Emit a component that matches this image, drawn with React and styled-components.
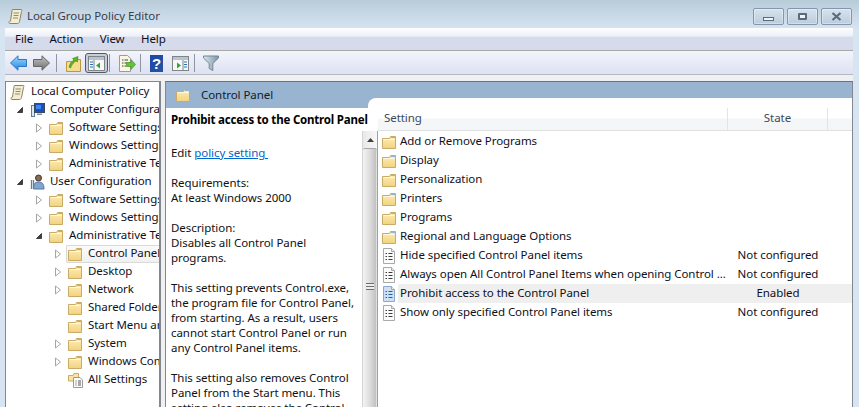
import React from 'react';
import styled, { createGlobalStyle } from 'styled-components';

const GlobalStyle = createGlobalStyle`
  html, body {
    margin: 0;
    padding: 0;
    height: 100%;
    overflow: hidden;
  }
  body {
    font-family: "Noto Sans", "Open Sans", sans-serif;
    font-size: 11.5px;
    letter-spacing: -0.06px;
    color: #111;
  }
`;

const treeItems = [
  { level: 0, icon: 'scroll', label: 'Local Computer Policy' },
  { level: 1, arrow: 'open', icon: 'computer', label: 'Computer Configuration' },
  { level: 2, arrow: 'closed', icon: 'folder', label: 'Software Settings' },
  { level: 2, arrow: 'closed', icon: 'folder', label: 'Windows Settings' },
  { level: 2, arrow: 'closed', icon: 'folder', label: 'Administrative Templates' },
  { level: 1, arrow: 'open', icon: 'user', label: 'User Configuration' },
  { level: 2, arrow: 'closed', icon: 'folder', label: 'Software Settings' },
  { level: 2, arrow: 'closed', icon: 'folder', label: 'Windows Settings' },
  { level: 2, arrow: 'open', icon: 'folder', label: 'Administrative Templates' },
  { level: 3, arrow: 'closed', icon: 'folder', label: 'Control Panel', selected: true },
  { level: 3, arrow: 'closed', icon: 'folder', label: 'Desktop' },
  { level: 3, arrow: 'closed', icon: 'folder', label: 'Network' },
  { level: 3, icon: 'folder', label: 'Shared Folders' },
  { level: 3, icon: 'folder', label: 'Start Menu and Taskbar' },
  { level: 3, arrow: 'closed', icon: 'folder', label: 'System' },
  { level: 3, arrow: 'closed', icon: 'folder', label: 'Windows Components' },
  { level: 3, icon: 'settings', label: 'All Settings' },
];

const settings = [
  { icon: 'folder', name: 'Add or Remove Programs', state: '' },
  { icon: 'folder', name: 'Display', state: '' },
  { icon: 'folder', name: 'Personalization', state: '' },
  { icon: 'folder', name: 'Printers', state: '' },
  { icon: 'folder', name: 'Programs', state: '' },
  { icon: 'folder', name: 'Regional and Language Options', state: '' },
  { icon: 'doc', name: 'Hide specified Control Panel items', state: 'Not configured' },
  { icon: 'doc', name: 'Always open All Control Panel Items when opening Control ...', state: 'Not configured' },
  { icon: 'doc', name: 'Prohibit access to the Control Panel', state: 'Enabled', selected: true },
  { icon: 'doc', name: 'Show only specified Control Panel items', state: 'Not configured' },
];

function FolderIcon() {
  return (
    <svg width="15" height="14" viewBox="0 0 15 14">
      <defs>
        <linearGradient id="fold" x1="0" y1="0" x2="0" y2="1">
          <stop offset="0" stopColor="#fdeebb" />
          <stop offset="1" stopColor="#f2d27c" />
        </linearGradient>
      </defs>
      <path d="M0.5 3.5H7.5L8.5 1.5L13.5 1.5V13.5H0.5Z" fill="url(#fold)" stroke="#c9ab68" />
      <path d="M1.5 4.5H12.5" stroke="#fff8dc" fill="none" />
      <path d="M9 2.5H13" stroke="#8fb8d8" fill="none" />
    </svg>
  );
}

function DocIcon({ selected }) {
  return (
    <svg width="15" height="16" viewBox="0 0 15 16">
      <path d="M1.5 0.5H9.5L12.5 3.5V15.5H1.5Z" fill={selected ? '#cfe0f6' : '#fbfbfb'} stroke={selected ? '#8aa8cf' : '#a9a9a9'} />
      <path d="M9.5 0.5V3.5H12.5" fill={selected ? '#f8f3b0' : '#e8e8e8'} stroke={selected ? '#8aa8cf' : '#a9a9a9'} />
      <path d="M3.5 5.5H5M6.5 5.5H10.5M3.5 8.5H5M6.5 8.5H10.5M3.5 11.5H5M6.5 11.5H10.5" stroke={selected ? '#1f5fa8' : '#3c3c3c'} />
    </svg>
  );
}

function ScrollIcon() {
  return (
    <svg width="15" height="17" viewBox="0 0 15 17">
      <path d="M4.5 1.5H13.5C14 1.5 14 3 13.5 3.5L11.5 13.5C11 15.5 10 15.5 9 15.5H2C0.5 15.5 0.5 13 2.5 13L4 3C4 2 4 1.5 4.5 1.5Z" fill="#f5edcf" stroke="#8c8468" />
      <path d="M5.5 5H11M5.5 7.5H10.5M5 10H10" stroke="#8f8a78" />
    </svg>
  );
}

function ComputerIcon() {
  return (
    <svg width="15" height="16" viewBox="0 0 15 16">
      <rect x="1.5" y="3.5" width="3" height="11" fill="#dfe6ee" stroke="#5f7d9c" />
      <rect x="4.5" y="1.5" width="10" height="9" fill="#1a4fc4" stroke="#3b4a63" />
      <path d="M6 3H11V7H6Z" fill="#3f88ea" />
      <path d="M7 11.5H12V13H7Z" fill="#7c8ea3" />
    </svg>
  );
}

function UserIcon() {
  return (
    <svg width="15" height="16" viewBox="0 0 15 16">
      <circle cx="8.5" cy="4" r="3" fill="#8a6a50" stroke="#3b3a3a" />
      <path d="M3.5 15C3.5 9 5.5 8 8.5 8C12 8 14 9.5 14 15Z" fill="#7fa6cf" stroke="#55789c" />
      <path d="M1.5 6V15M3.5 6V15" stroke="#5e7f9f" strokeWidth="1.3" />
    </svg>
  );
}

function SettingsIcon() {
  return (
    <svg width="15" height="16" viewBox="0 0 15 16">
      <path d="M0.5 3.5H5L6 1.5H10.5V9H0.5Z" fill="#f9e4a4" stroke="#c9ab68" />
      <path d="M5.5 5.5H12L14.5 8V15.5H5.5Z" fill="#fbfbfb" stroke="#9a9a9a" />
      <path d="M7.5 9H8.5M10 9H13M7.5 11H8.5M10 11H13M7.5 13H8.5M10 13H13" stroke="#555" />
    </svg>
  );
}

const treeIcons = {
  scroll: ScrollIcon,
  computer: ComputerIcon,
  user: UserIcon,
  folder: FolderIcon,
  settings: SettingsIcon,
};

function TreeArrow({ kind }) {
  if (kind === 'open') {
    return (
      <svg width="8" height="8" viewBox="0 0 8 8">
        <path d="M6.5 1.5V6.5H1.5Z" fill="#404040" stroke="#404040" />
      </svg>
    );
  }
  return (
    <svg width="8" height="10" viewBox="0 0 8 10">
      <path d="M1.5 1V9L6.5 5Z" fill="#fff" stroke="#a6a6a6" />
    </svg>
  );
}

function BackIcon() {
  return (
    <svg width="17" height="16" viewBox="0 0 17 16">
      <defs>
        <linearGradient id="back" x1="0" y1="0" x2="0" y2="1">
          <stop offset="0" stopColor="#9fdcff" />
          <stop offset="1" stopColor="#1f83e0" />
        </linearGradient>
      </defs>
      <path d="M0.5 8L8 0.8V4.5H16.5V11.5H8V15.2Z" fill="url(#back)" stroke="#2b78c4" />
    </svg>
  );
}

function ForwardIcon() {
  return (
    <svg width="17" height="16" viewBox="0 0 17 16">
      <defs>
        <linearGradient id="fwd" x1="0" y1="0" x2="0" y2="1">
          <stop offset="0" stopColor="#c4c4c4" />
          <stop offset="1" stopColor="#6e6e6e" />
        </linearGradient>
      </defs>
      <path d="M16.5 8L9 0.8V4.5H0.5V11.5H9V15.2Z" fill="url(#fwd)" stroke="#666" />
    </svg>
  );
}

function FolderUpIcon() {
  return (
    <svg width="15" height="17" viewBox="0 0 15 17">
      <path d="M0.5 6.5H7L8 4.5H14.5V16.5H0.5Z" fill="#f5dc8f" stroke="#b9993f" />
      <path d="M3 12C4 8 6 6 8 5L6.5 3.5L12 1.5L11.5 7L10 6C8 7 6 9 4.5 13Z" fill="#5fb41e" stroke="#3f8a10" strokeWidth="0.6" />
    </svg>
  );
}

function PaneIcon({ arrowRight }) {
  return (
    <svg width="17" height="15" viewBox="0 0 17 15">
      <rect x="0.5" y="0.5" width="16" height="14" fill="#f7f7f7" stroke="#7f8489" />
      <rect x="1" y="1" width="15" height="3" fill="#b9c4cf" />
      {arrowRight ? (
        <>
          <path d="M5 6.5L9 9.5L5 12.5Z" fill="#2fa82f" />
          <path d="M12 6H15M12 8.5H15M12 11H15" stroke="#2a6fb0" strokeWidth="1.2" />
          <path d="M11 4V14" stroke="#7f8489" />
        </>
      ) : (
        <>
          <path d="M12 6.5L8 9.5L12 12.5Z" fill="#2fa82f" />
          <path d="M2 6H5M2 8.5H5M2 11H5" stroke="#2a6fb0" strokeWidth="1.2" />
          <path d="M6 4V14" stroke="#7f8489" />
        </>
      )}
    </svg>
  );
}

function ExportIcon() {
  return (
    <svg width="18" height="17" viewBox="0 0 18 17">
      <path d="M1.5 0.5H9.5L12.5 3.5V16.5H1.5Z" fill="#fbf6e2" stroke="#9d9d8f" />
      <path d="M4 5H5.5M6.5 5H10M4 8H5.5M6.5 8H9M4 11H5.5M6.5 11H8" stroke="#444" />
      <path d="M8.5 7.5H13V4.5L17.5 9.5L13 14.5V11.5H8.5Z" fill="#63c23a" stroke="#3f962a" strokeWidth="0.7" />
    </svg>
  );
}

function FilterIcon() {
  return (
    <svg width="16" height="16" viewBox="0 0 16 16">
      <defs>
        <linearGradient id="filt" x1="0" y1="0" x2="1" y2="0">
          <stop offset="0" stopColor="#dbe5ea" />
          <stop offset="1" stopColor="#7d95a5" />
        </linearGradient>
      </defs>
      <path d="M0.5 1H15.5V3L9.8 8.5V15.5L6.2 13.5V8.5L0.5 3Z" fill="url(#filt)" stroke="#6f8797" />
    </svg>
  );
}

export default function App() {
  return (
    <>
      <GlobalStyle />
      <Window>
        <TitleBar>
          <TitleLeft>
            <ScrollIcon />
            <TitleText>Local Group Policy Editor</TitleText>
          </TitleLeft>
          <WindowButtons>
            <WindowButton>
              <MinGlyph />
            </WindowButton>
            <WindowButton>
              <MaxGlyph />
            </WindowButton>
            <WindowButton>
              <svg width="11" height="9" viewBox="0 0 11 9">
                <path d="M1.5 1L9.5 8M9.5 1L1.5 8" stroke="#5c6b7a" strokeWidth="2.2" fill="none" />
              </svg>
            </WindowButton>
          </WindowButtons>
        </TitleBar>

        <MenuBar>
          <MenuItem>File</MenuItem>
          <MenuItem>Action</MenuItem>
          <MenuItem>View</MenuItem>
          <MenuItem>Help</MenuItem>
        </MenuBar>

        <Toolbar>
          <ToolSlot $ml={5}><BackIcon /></ToolSlot>
          <ToolSlot $ml={6}><ForwardIcon /></ToolSlot>
          <ToolSeparator $ml={6} />
          <ToolSlot $ml={9}><FolderUpIcon /></ToolSlot>
          <ToggleButton><PaneIcon /></ToggleButton>
          <ToolSeparator $ml={1} />
          <ToolSlot $ml={8}><ExportIcon /></ToolSlot>
          <ToolSeparator $ml={4} />
          <ToolSlot $ml={9}><HelpIcon>?</HelpIcon></ToolSlot>
          <ToolSlot $ml={9}><PaneIcon arrowRight /></ToolSlot>
          <ToolSeparator $ml={5} />
          <ToolSlot $ml={8}><FilterIcon /></ToolSlot>
        </Toolbar>

        <Panes>
          <TreePane>
            {treeItems.map((item, i) => {
              const Icon = treeIcons[item.icon];
              return (
                <TreeRow key={i} $level={item.level}>
                  {item.level > 0 && (
                    <ArrowSlot>{item.arrow && <TreeArrow kind={item.arrow} />}</ArrowSlot>
                  )}
                  <TreeNode $selected={item.selected}>
                    <TreeIconSlot $root={item.level === 0}><Icon /></TreeIconSlot>
                    <TreeLabel>{item.label}</TreeLabel>
                  </TreeNode>
                </TreeRow>
              );
            })}
          </TreePane>

          <ContentPane>
            <ContentHeader>
              <FolderIcon />
              <HeaderTitle>Control Panel</HeaderTitle>
              <HeaderTab />
            </ContentHeader>

            <ContentBody>
              <Description>
                <DescTitle>Prohibit access to the Control Panel</DescTitle>
                <DescBlock>Edit <PolicyLink>policy setting </PolicyLink></DescBlock>
                <DescBlock>Requirements:<br />At least Windows 2000</DescBlock>
                <DescBlock>Description:<br />Disables all Control Panel<br />programs.</DescBlock>
                <DescBlock>
                  This setting prevents Control.exe,<br />
                  the program file for Control Panel,<br />
                  from starting. As a result, users<br />
                  cannot start Control Panel or run<br />
                  any Control Panel items.
                </DescBlock>
                <DescBlock>
                  This setting also removes Control<br />
                  Panel from the Start menu. This<br />
                  setting also removes the Control
                </DescBlock>
              </Description>

              <ScrollBar>
                <ScrollUp>
                  <svg width="7" height="4" viewBox="0 0 7 4">
                    <path d="M0 4L3.5 0L7 4Z" fill="#404040" />
                  </svg>
                </ScrollUp>
                <ScrollThumb>
                  <Grip />
                </ScrollThumb>
              </ScrollBar>

              <ListPane>
                <ListHeader>
                  <SettingHead>Setting</SettingHead>
                  <StateHead>State</StateHead>
                </ListHeader>
                <ListRows>
                  {settings.map((row) => (
                    <Row key={row.name}>
                      <RowIcon>
                        {row.icon === 'folder' ? <FolderIcon /> : <DocIcon selected={row.selected} />}
                      </RowIcon>
                      <RowBody $selected={row.selected}>
                        <RowName>{row.name}</RowName>
                        <RowState>{row.state}</RowState>
                      </RowBody>
                    </Row>
                  ))}
                </ListRows>
              </ListPane>
            </ContentBody>
          </ContentPane>
        </Panes>
      </Window>
    </>
  );
}

const Window = styled.div`
  width: 859px;
  height: 407px;
  box-sizing: border-box;
  padding: 0 6px 0 5px;
  display: flex;
  flex-direction: column;
  overflow: hidden;
  background: #d7e4f2;
`;

const TitleBar = styled.header`
  height: 28px;
  margin: 0 -6px 0 -5px;
  padding: 0 7px 0 8px;
  display: flex;
  align-items: flex-start;
  justify-content: space-between;
  flex-shrink: 0;
  background: linear-gradient(#b9ccda, #d5e3f1);
`;

const TitleLeft = styled.div`
  display: flex;
  align-items: center;
  height: 17px;
  margin-top: 8px;
  gap: 4px;
`;

const TitleText = styled.span`
  color: #3a4048;
  font-size: 11.5px;
  margin-bottom: 2px;
`;

const WindowButtons = styled.div`
  display: flex;
  gap: 3px;
  margin-top: 8px;
`;

const WindowButton = styled.div`
  width: 29px;
  height: 15px;
  border: 1px solid #8496ab;
  border-radius: 2px;
  display: flex;
  align-items: center;
  justify-content: center;
  background: linear-gradient(#d6e2ee, #bcccdc);
  box-shadow: inset 0 0 0 1px rgba(255, 255, 255, 0.35);
`;

const MinGlyph = styled.span`
  width: 9px;
  height: 2px;
  margin-top: 4px;
  border: 1px solid #5c6b7a;
  background: #eef3f8;
`;

const MaxGlyph = styled.span`
  width: 5px;
  height: 3px;
  border: 2px solid #5c6b7a;
  border-radius: 1px;
  background: #eef3f8;
`;

const MenuBar = styled.nav`
  height: 22px;
  flex-shrink: 0;
  display: flex;
  align-items: center;
  padding-left: 10px;
  gap: 16.4px;
  border-bottom: 1px solid #a9a9a9;
  background: linear-gradient(#fdfdfe 0%, #edf0f8 38%, #d6dbec 40%, #d6dbec 100%);
`;

const MenuItem = styled.span`
  color: #10101a;
  margin-bottom: 2px;
`;

const Toolbar = styled.div`
  height: 22px;
  flex-shrink: 0;
  display: flex;
  align-items: center;
  border-top: 1px solid #f4f4f8;
  border-bottom: 1px solid #b4b7c4;
  background: linear-gradient(#f2f4fb, #dde1f1);
`;

const ToolSlot = styled.div`
  display: flex;
  align-items: center;
  margin-left: ${(p) => p.$ml}px;
`;

const ToolSeparator = styled.div`
  width: 1px;
  height: 18px;
  margin-left: ${(p) => p.$ml}px;
  background: #8f96a2;
`;

const ToggleButton = styled.div`
  width: 23px;
  height: 20px;
  box-sizing: border-box;
  margin-left: 4px;
  display: flex;
  align-items: center;
  justify-content: center;
  border: 1px solid #4f5a66;
  border-radius: 3px;
  background: #c6cddb;
`;

const HelpIcon = styled.span`
  width: 13px;
  height: 17px;
  display: flex;
  align-items: center;
  justify-content: center;
  color: #fff;
  font-family: "Liberation Sans", sans-serif;
  font-weight: 700;
  font-size: 15px;
  background: linear-gradient(135deg, #1c46a8, #26549e);
`;

const Panes = styled.main`
  flex: 1;
  min-height: 0;
  display: flex;
  gap: 4px;
  padding-top: 6px;
  background: #f0f0f0;
`;

const TreePane = styled.aside`
  width: 156px;
  flex-shrink: 0;
  box-sizing: border-box;
  border: 1px solid #828790;
  border-bottom: none;
  border-right-width: 2px;
  padding-top: 1px;
  background: #fff;
  overflow: hidden;
`;

const TreeRow = styled.div`
  height: 18px;
  display: flex;
  align-items: center;
  box-sizing: border-box;
  padding-left: ${(p) => (p.$level === 0 ? 4 : 10 + 19 * (p.$level - 1))}px;
  white-space: nowrap;
`;

const ArrowSlot = styled.span`
  width: 14px;
  flex-shrink: 0;
  display: flex;
  align-items: center;
  box-sizing: border-box;
`;

const TreeNode = styled.span`
  flex: 1;
  min-width: 0;
  height: 18px;
  display: flex;
  align-items: center;
  box-sizing: border-box;
  overflow: hidden;
  margin-left: ${(p) => (p.$selected ? -2 : 0)}px;
  padding-left: ${(p) => (p.$selected ? 1 : 0)}px;
  border: ${(p) => (p.$selected ? '1px solid #d9d9d9' : 'none')};
  border-right: none;
  border-radius: 2px 0 0 2px;
  background: ${(p) => (p.$selected ? 'linear-gradient(#fafafa, #f1f1f1)' : 'transparent')};
`;

const TreeIconSlot = styled.span`
  width: 15px;
  flex-shrink: 0;
  margin-right: ${(p) => (p.$root ? 6 : 5)}px;
  display: flex;
  align-items: center;
`;

const TreeLabel = styled.span`
  color: #10101a;
  margin-bottom: 3px;
`;

const ContentPane = styled.section`
  flex: 1;
  min-width: 0;
  display: flex;
  flex-direction: column;
  box-sizing: border-box;
  border: 1px solid #828790;
  border-bottom: none;
  border-top-color: #6d7278;
  background: #fff;
`;

const ContentHeader = styled.div`
  height: 26px;
  flex-shrink: 0;
  display: flex;
  align-items: flex-start;
  padding-left: 10px;
  padding-top: 6px;
  box-sizing: border-box;
  background: #98b4d0;
`;

const HeaderTitle = styled.span`
  margin-left: 10px;
  color: #10202e;
  line-height: 14px;
`;

const HeaderTab = styled.div`
  width: 484px;
  height: 10px;
  margin: 10px 0 0 auto;
  border-top-left-radius: 8px;
  background: #fff;
`;

const ContentBody = styled.div`
  flex: 1;
  min-height: 0;
  display: flex;
  overflow: hidden;
`;

const Description = styled.article`
  width: 196px;
  flex-shrink: 0;
  box-sizing: border-box;
  padding: 4px 0 0 5px;
  line-height: 15px;
  white-space: nowrap;
`;

const DescTitle = styled.h1`
  margin: 0 0 18px;
  font-size: 11.5px;
  line-height: 15px;
  font-weight: 700;
  letter-spacing: -0.2px;
  color: #000;
`;

const DescBlock = styled.p`
  margin: 0 0 15px;
  color: #111;
`;

const PolicyLink = styled.a`
  color: #0066cc;
  text-decoration: underline;
  white-space: pre;
`;

const ScrollBar = styled.div`
  width: 16px;
  flex-shrink: 0;
  box-sizing: border-box;
  margin-top: 23px;
  display: flex;
  flex-direction: column;
  border-left: 1px solid #d5d5d5;
  border-right: 1px solid #a0a0a0;
  background: linear-gradient(90deg, #e9e9e9, #f7f7f7);
`;

const ScrollUp = styled.div`
  height: 17px;
  flex-shrink: 0;
  display: flex;
  align-items: center;
  justify-content: center;
`;

const ScrollThumb = styled.div`
  flex: 1;
  display: flex;
  justify-content: center;
  padding-top: 134px;
  border-radius: 2px 2px 0 0;
  border-top: 1px solid #a6a6a6;
  background: linear-gradient(90deg, #f4f4f4 0%, #dcdcdc 50%, #c3c3c3 90%, #efefef 100%);
`;

const Grip = styled.div`
  width: 8px;
  height: 7px;
  background: repeating-linear-gradient(#6e6e6e 0, #6e6e6e 1px, #eee 1px, #eee 3px);
`;

const ListPane = styled.div`
  flex: 1;
  min-width: 0;
  display: flex;
  flex-direction: column;
`;

const ListHeader = styled.div`
  height: 23px;
  flex-shrink: 0;
  display: flex;
  box-sizing: border-box;
  border-bottom: 1px solid #e0e1e3;
  background: linear-gradient(#fff 0%, #fff 45%, #f5f6f7 50%, #f4f5f6 100%);
`;

const SettingHead = styled.div`
  width: 350px;
  box-sizing: border-box;
  padding: 2px 0 0 6px;
  color: #3c4a5a;
  border-right: 1px solid #e3e4e6;
`;

const StateHead = styled.div`
  width: 100px;
  box-sizing: border-box;
  padding-top: 2px;
  text-align: center;
  color: #3c4a5a;
  border-right: 1px solid #e3e4e6;
`;

const ListRows = styled.div`
  padding-top: 1px;
`;

const Row = styled.div`
  height: 19px;
  display: flex;
  align-items: center;
  padding-left: 4px;
`;

const RowIcon = styled.span`
  width: 15px;
  flex-shrink: 0;
  display: flex;
  align-items: center;
`;

const RowBody = styled.div`
  flex: 1;
  height: 19px;
  margin-left: 1px;
  display: flex;
  align-items: center;
  background: ${(p) => (p.$selected ? '#efefef' : 'transparent')};
`;

const RowName = styled.span`
  width: 330px;
  box-sizing: border-box;
  padding-left: 2px;
  margin-bottom: 2px;
  white-space: nowrap;
  overflow: hidden;
  color: #10101a;
`;

const RowState = styled.span`
  width: 100px;
  margin-bottom: 2px;
  text-align: center;
  white-space: nowrap;
  color: #10101a;
`;
